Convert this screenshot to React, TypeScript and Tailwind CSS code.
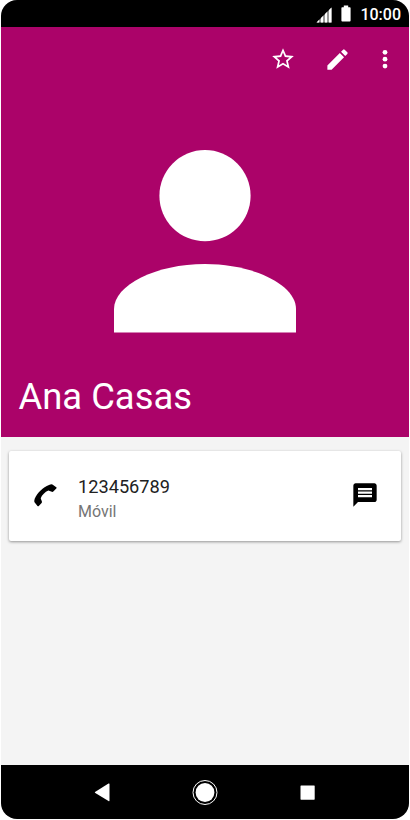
import React from "react";

function StatusBar() {
  return (
    <div className="flex h-[27px] items-center justify-end bg-black pr-[8px] text-white">
      <svg className="mt-[2px] mr-[9px] h-4 w-4" viewBox="0 0 16 16" fill="currentColor">
        <path d="M0.5 15.5L15.5 0.500V15.5Z" fill="#999999" />
        <path d="M0.5 15.5L3 13V15.5ZM5 15.5V11L7 9V15.5ZM9 15.5V7L11 5V15.5ZM13 15.5V3L15.500 .5V15.5Z" />
      </svg>
      <svg className="mr-[9px] h-[17px] w-[10px]" viewBox="0 0 10 17" fill="currentColor">
        <path d="M2.800 .5h4.400v1.700h1.600q.8 0 .8.8v12.500q0 1-.9 1H1.300q-.9 0-.9-1V3q0-.8.8-.8H2.800Z" />
      </svg>
      <span className="mt-[2px] text-[16px] leading-none font-medium">10:00</span>
    </div>
  );
}

function Header() {
  return (
    <header className="flex h-[410px] flex-col bg-[#ab0369] text-white">
      <div className="flex h-[64px] items-center justify-end pr-[11px]">
        <svg className="mr-[28px] h-[26px] w-[26px]" viewBox="0 0 24 24" fill="currentColor">
          <path d="m22 9.24-7.19-.62L12 2 9.19 8.63 2 9.24l5.46 4.73L5.82 21 12 17.27 18.18 21l-1.63-7.03L22 9.24zM12 15.4l-3.76 2.27 1-4.28-3.32-2.88 4.38-.38L12 6.1l1.71 4.04 4.38.38-3.32 2.88 1 4.28L12 15.4z" />
        </svg>
        <svg className="mr-[21px] h-[27px] w-[27px]" viewBox="0 0 24 24" fill="currentColor">
          <path d="M3 17.25V21h3.75L17.81 9.94l-3.75-3.75L3 17.25zM20.71 7.04a.996.996 0 0 0 0-1.41l-2.34-2.34a.996.996 0 0 0-1.41 0l-1.83 1.83 3.75 3.75 1.83-1.83z" />
        </svg>
        <svg className="h-[26px] w-[26px]" viewBox="0 0 26 26" fill="currentColor">
          <circle cx="13" cy="6.300" r="2.400" />
          <circle cx="13" cy="13.200" r="2.400" />
          <circle cx="13" cy="20.100" r="2.400" />
        </svg>
      </div>
      <svg className="mt-[59px] ml-[113px] h-[183px] w-[183px] shrink-0" viewBox="0 0 183 183" fill="currentColor">
        <circle cx="91" cy="45.7" r="45.600" />
        <path d="M0 182.400V159C0 135 42 114 91 114S182 135 182 159V182.400Z" />
      </svg>
      <h1 className="mt-[42px] ml-[17.5px] text-[36.4px] leading-[44px] font-normal">Ana Casas</h1>
    </header>
  );
}

function ContactCard() {
  return (
    <section className="mx-[8px] mt-[14px] flex h-[90px] items-center rounded-[2px] bg-white pr-[22.5px] pl-[24px] shadow-[0_1px_3px_rgba(0,0,0,0.4)]">
      <svg className="mb-[2px] h-6 w-6" viewBox="0 0 24 24" fill="black">
        <path d="M1.700 15.800C4.500 9.500 10 4 16 1.900Q18.300 1 19.400 1.500L23.300 4.300Q24 4.900 23.300 5.500L20.300 8.600Q19.600 9.200 18.800 8.800L15.400 7.600C12 9 9 12 7.700 15.300L8.900 18.500Q9.200 19.300 8.600 19.900L5.800 23Q5.100 23.700 4.500 23L1.500 19.300Q.9 18.300 1.700 15.800Z" />
      </svg>
      <div className="mt-[7px] ml-[21px] flex-1">
        <p className="text-[18.2px] leading-[25px] text-[#212121]">123456789</p>
        <p className="text-[16px] leading-[26px] text-[#757575]">Móvil</p>
      </div>
      <svg className="mb-[2px] h-[28px] w-[28px]" viewBox="0 0 24 24" fill="black">
        <path d="M20 2H4c-1.1 0-1.99.9-1.99 2L2 22l4-4h14c1.100 0 2-.9 2-2V4c0-1.100-.9-2-2-2zm-2 12H6v-2h12v2zm0-3H6V9h12v2zm0-3H6V6h12v2z" />
      </svg>
    </section>
  );
}

function NavigationBar() {
  return (
    <nav className="mt-auto flex h-[54px] items-center justify-center bg-black text-white">
      <svg className="h-7 w-7" viewBox="0 0 28 28" fill="currentColor">
        <path d="M7 14 20.500 5.600q1-.6 1 .5v16.500q0 1.100-1 .5L7.300 15Q6.500 14.500 7 14Z" />
      </svg>
      <svg className="mx-[75px] h-7 w-7" viewBox="0 0 28 28">
        <circle cx="14" cy="14.500" r="12" fill="none" stroke="currentColor" />
        <circle cx="14" cy="14.500" r="9.400" fill="currentColor" />
      </svg>
      <svg className="h-7 w-7" viewBox="0 0 28 28" fill="currentColor">
        <rect x="6.500" y="7.500" width="14.200" height="14.200" rx="0.600" />
      </svg>
    </nav>
  );
}

export default function App() {
  return (
    <main className="h-[820px] w-[410px] bg-white px-px pb-px font-['Roboto',sans-serif]">
      <div className="flex h-full flex-col overflow-hidden rounded-[16px] bg-[#f4f4f4]">
        <StatusBar />
        <Header />
        <ContactCard />
        <NavigationBar />
      </div>
    </main>
  );
}
